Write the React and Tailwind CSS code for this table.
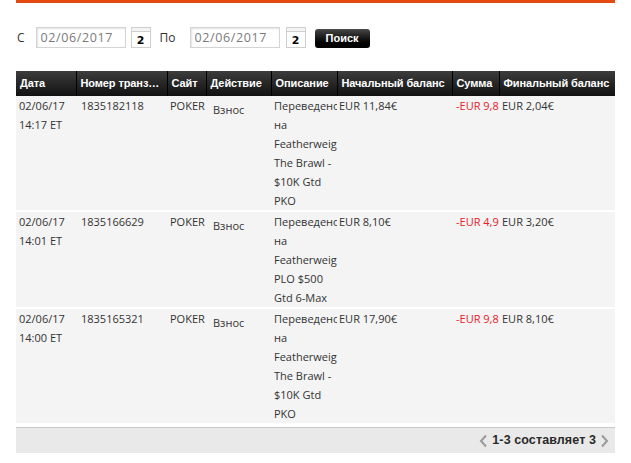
import { useState } from "react";

const rows = [
  {
    date: ["02/06/17", "14:17 ET"],
    id: "1835182118",
    site: "POKER",
    action: "Взнос",
    desc: "Переведено на Featherweight The Brawl - $10K Gtd PKO",
    start: "EUR 11,84€",
    amount: "-EUR 9,80€",
    end: "EUR 2,04€",
  },
  {
    date: ["02/06/17", "14:01 ET"],
    id: "1835166629",
    site: "POKER",
    action: "Взнос",
    desc: "Переведено на Featherweight PLO $500 Gtd 6-Max",
    start: "EUR 8,10€",
    amount: "-EUR 4,90€",
    end: "EUR 3,20€",
  },
  {
    date: ["02/06/17", "14:00 ET"],
    id: "1835165321",
    site: "POKER",
    action: "Взнос",
    desc: "Переведено на Featherweight The Brawl - $10K Gtd PKO",
    start: "EUR 17,90€",
    amount: "-EUR 9,80€",
    end: "EUR 8,10€",
  },
];

const columns = [
  { title: "Дата", w: "w-[60px]" },
  { title: "Номер транзакции", w: "w-[91px]" },
  { title: "Сайт", w: "w-[39px]" },
  { title: "Действие", w: "w-[65px]" },
  { title: "Описание", w: "w-[66px]" },
  { title: "Начальный баланс", w: "w-[115px]" },
  { title: "Сумма", w: "w-[47px]" },
  { title: "Финальный баланс", w: "w-[116px]" },
];

function CalendarButton() {
  return (
    <div className="w-[20px] h-[21px] border border-[#cfcfcf] bg-white flex flex-col">
      <div className="h-[4px] border-b border-[#cfcfcf] bg-[#f4f4f4]" />
      <div className="flex-1 flex items-end justify-center pb-[1px] text-[11px] leading-none font-bold text-black font-['DejaVu_Sans',sans-serif]">
        2
      </div>
    </div>
  );
}

function DateInput({ value, onChange }) {
  return (
    <input
      value={value}
      onChange={(e) => onChange(e.target.value)}
      className="w-[90px] h-[21px] border border-[#d4d4d4] shadow-[inset_1px_1px_2px_rgba(0,0,0,0.12)] px-[4px] text-[12.5px] tracking-[0.6px] text-[#7a7a7a] outline-none font-['Open_Sans',sans-serif]"
    />
  );
}

export default function App() {
  const [from, setFrom] = useState("02/06/2017");
  const [to, setTo] = useState("02/06/2017");

  return (
    <div className="w-[631px] h-[463px] bg-white overflow-hidden font-['Open_Sans',sans-serif] text-[#333]">
      <div className="mx-[16px] h-[3px] bg-[#e24a12]" />

      {/* FILTER */}
      <div className="flex items-center mt-[24px] h-[21px] pl-[17px] text-[12px] text-[#333]">
        <span className="mr-[11px]">С</span>
        <DateInput value={from} onChange={setFrom} />
        <div className="ml-[5px]">
          <CalendarButton />
        </div>
        <span className="ml-[9px] mr-[14px]">По</span>
        <DateInput value={to} onChange={setTo} />
        <div className="ml-[6px]">
          <CalendarButton />
        </div>
        <button className="ml-[9px] mt-[2px] w-[55px] h-[19px] rounded-[3px] bg-gradient-to-b from-[#4a4a4a] via-[#151515] to-[#000] text-white text-[11px] font-bold leading-none font-['Liberation_Sans',sans-serif]">
          Поиск
        </button>
      </div>

      {/* TABLE */}
      <div className="mx-[16px] mt-[23px]">
        <table className="table-fixed w-[599px] border-collapse text-[11px]">
          <colgroup>
            {columns.map((c) => (
              <col key={c.title} className={c.w} />
            ))}
          </colgroup>
          <thead>
            <tr className="h-[25px] bg-gradient-to-b from-[#3d3d3d] to-[#121212]">
              {columns.map((c, i) => (
                <th
                  key={c.title}
                  className={`text-left text-white font-bold text-[11px] tracking-[-0.1px] px-[4px] truncate font-['Liberation_Sans',sans-serif] ${
                    i > 0 ? "border-l border-[#000]" : ""
                  }`}
                >
                  {c.title}
                </th>
              ))}
            </tr>
          </thead>
          <tbody>
            {rows.map((r) => (
              <tr key={r.id} className="bg-[#f4f4f4] border-b-2 border-white align-top leading-[19px]">
                <td className="pl-[3px] pb-[1px]">
                  {r.date[0]}
                  <br />
                  {r.date[1]}
                </td>
                <td className="pl-[5px] overflow-hidden whitespace-nowrap">{r.id}</td>
                <td className="pl-[3px] overflow-hidden whitespace-nowrap">{r.site}</td>
                <td className="pl-[7px] pt-[4px] overflow-hidden whitespace-nowrap">{r.action}</td>
                <td className="pl-[3px] overflow-hidden">{r.desc}</td>
                <td className="pl-[2px] overflow-hidden whitespace-nowrap">{r.start}</td>
                <td className="pl-[4px] overflow-hidden whitespace-nowrap text-[#e8202a]">{r.amount}</td>
                <td className="pl-[3px] overflow-hidden whitespace-nowrap">{r.end}</td>
              </tr>
            ))}
          </tbody>
        </table>

        {/* PAGER */}
        <div className="h-[26px] mt-[2px] bg-[#e9e9e9] border-t border-[#c9c9c9] flex items-center justify-end pr-[6px] gap-[4px] font-['Liberation_Sans',sans-serif]">
          <svg width="9" height="14" viewBox="0 0 9 14" className="mt-[1px]">
            <path d="M7 1.5 L2 7 L7 12.5" fill="none" stroke="#9a9a9a" strokeWidth="2" />
          </svg>
          <span className="text-[12.5px] font-bold text-[#2a2a2a] tracking-[0.1px]">1-3 составляет 3</span>
          <svg width="9" height="14" viewBox="0 0 9 14" className="mt-[1px]">
            <path d="M2 1.5 L7 7 L2 12.5" fill="none" stroke="#9a9a9a" strokeWidth="2" />
          </svg>
        </div>
      </div>
    </div>
  );
}
